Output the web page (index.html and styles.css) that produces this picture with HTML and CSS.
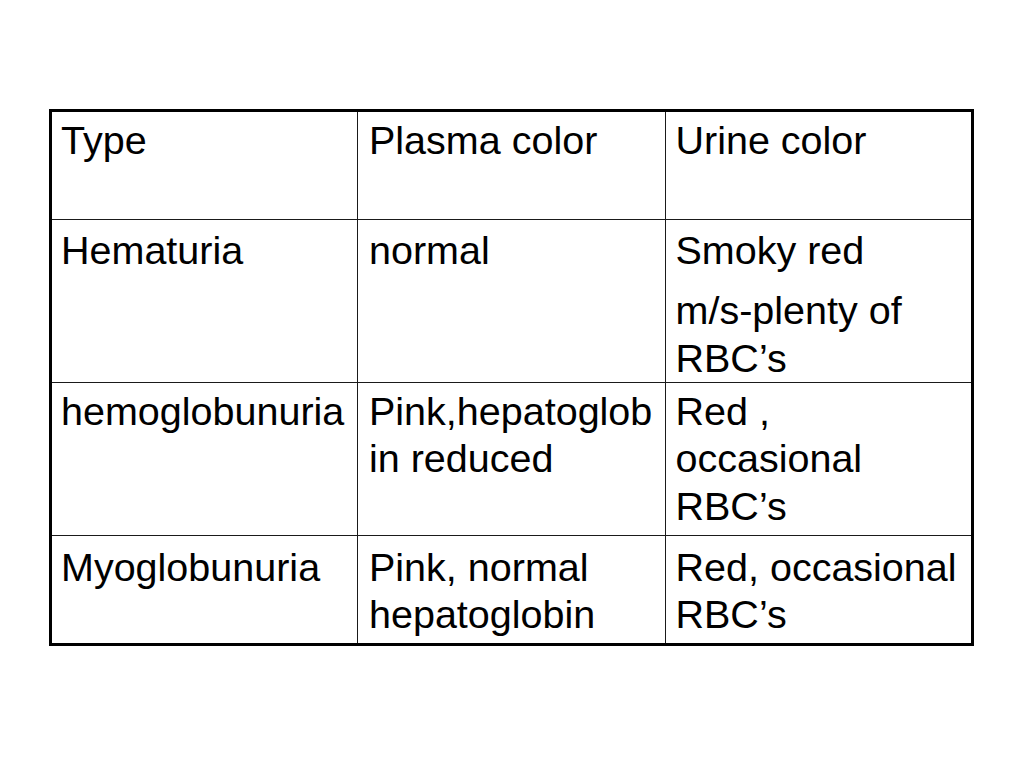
FILE: index.html
```html
<!DOCTYPE html>
<html lang="en">
<head>
<meta charset="utf-8">
<title>Hemoglobinuria table</title>
<link rel="stylesheet" href="styles.css">
</head>
<body>
<table class="grid">
  <colgroup>
    <col class="c1"><col class="c2"><col class="c3">
  </colgroup>
  <tr class="r1">
    <td>Type</td>
    <td class="mid">Plasma color</td>
    <td class="last">Urine color</td>
  </tr>
  <tr class="r2">
    <td>Hematuria</td>
    <td class="mid">normal</td>
    <td class="last"><p>Smoky red</p><p class="next">m/s-plenty of<br>RBC’s</p></td>
  </tr>
  <tr class="r3">
    <td>hemoglobunuria</td>
    <td class="mid">Pink,hepatoglob<br>in reduced</td>
    <td class="last">Red ,<br>occasional<br>RBC’s</td>
  </tr>
  <tr class="r4 bottom">
    <td>Myoglobunuria</td>
    <td class="mid">Pink, normal<br>hepatoglobin</td>
    <td class="last">Red, occasional<br>RBC’s</td>
  </tr>
</table>
</body>
</html>
```

FILE: styles.css
```css
html, body {
  margin: 0;
  padding: 0;
  background: #ffffff;
}
body {
  width: 1024px;
  height: 768px;
  overflow: hidden;
  font-family: "Liberation Sans", Arial, sans-serif;
  color: #000;
}
.grid {
  margin: 109px 0 0 49px;
  border: 3px solid #000;
  border-collapse: separate;
  border-spacing: 0;
  table-layout: fixed;
  width: 925px;
}
.c1 { width: 306px; }
.c2 { width: 308px; }
.c3 { width: 305px; }
.grid td {
  border-right: 1px solid #1a1a1a;
  border-bottom: 1px solid #1a1a1a;
  vertical-align: top;
  padding: 0 0 0 9px;
  font-size: 39.5px;
  line-height: 47.5px;
  white-space: nowrap;
  box-sizing: border-box;
}
.grid td.mid { padding-left: 11px; }
.grid td.last { border-right: none; padding-left: 9.5px; }
.grid tr.bottom td { border-bottom: none; }
.grid p { margin: 0; }
.grid p.next { margin-top: 12.5px; }
.r1 td { height: 108px; padding-top: 4.5px; }
.r2 td { height: 163px; padding-top: 7px; }
.r3 td { height: 153px; padding-top: 4.5px; }
.r4 td { height: 107px; padding-top: 7.5px; }
```
